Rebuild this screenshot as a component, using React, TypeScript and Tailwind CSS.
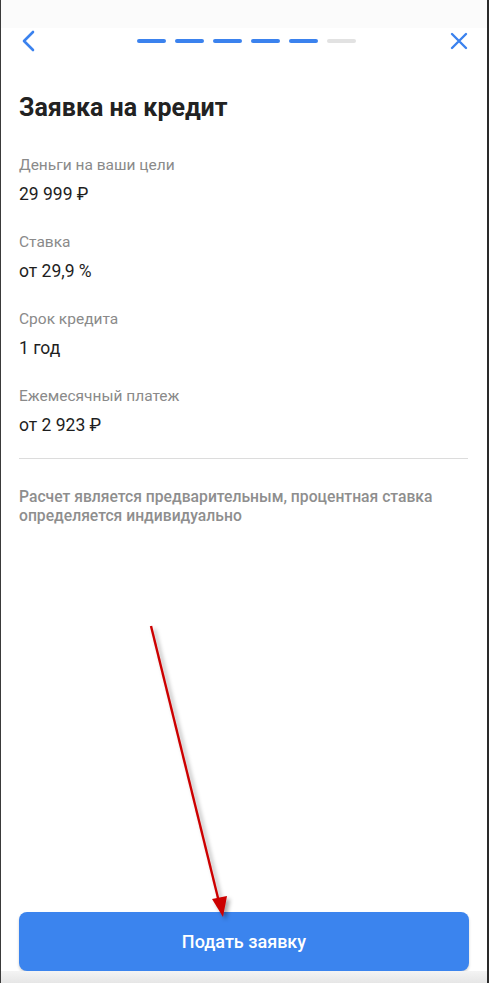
import React from 'react';

const rows = [
  { label: 'Деньги на ваши цели', value: '29 999 ₽' },
  { label: 'Ставка', value: 'от 29,9 %' },
  { label: 'Срок кредита', value: '1 год' },
  { label: 'Ежемесячный платеж', value: 'от 2 923 ₽' },
];

const steps = [true, true, true, true, true, false];

const App: React.FC = () => {
  return (
    <div
      className="relative w-[489px] h-[983px] flex flex-col bg-white border-l border-l-[#3a3a3a] border-r-2 border-r-[#2a2a2a] overflow-hidden"
      style={{ fontFamily: 'Roboto, "Noto Sans", sans-serif' }}
    >
      {/* header */}
      <div className="h-[28px] bg-[#fbfbfb]" />
      <div className="flex items-center justify-between h-[26px] pl-[20px] pr-[19px]">
        <svg width="16" height="22" viewBox="0 0 16 22" fill="none">
          <path d="M12 2 L3 11 L12 20" stroke="#3b82ee" strokeWidth="2.6" strokeLinecap="round" strokeLinejoin="round" />
        </svg>
        <div className="flex gap-[9px] ml-[6px]">
          {steps.map((done, i) => (
            <div key={i} className={`w-[29px] h-[4px] rounded-full ${done ? 'bg-[#3b82ee]' : 'bg-[#e2e2e2]'}`} />
          ))}
        </div>
        <svg width="18" height="18" viewBox="0 0 18 18" fill="none">
          <path d="M2 2 L16 16 M16 2 L2 16" stroke="#3b82ee" strokeWidth="2.4" strokeLinecap="round" />
        </svg>
      </div>

      <div className="pl-[18px] pr-[19px] pt-[39px]">
        <h1 className="text-[25px] leading-[30px] font-bold text-[#222]">Заявка на кредит</h1>

        <div className="mt-[32px] flex flex-col gap-[27px]">
          {rows.map(r => (
            <div key={r.label} className="flex flex-col gap-[7px]">
              <span className="text-[15.5px] leading-[21px] text-[#8a8a8a]">{r.label}</span>
              <span className="text-[17.5px] leading-[22px] text-[#1e1e1e]">{r.value}</span>
            </div>
          ))}
        </div>

        <div className="mt-[22px] h-px bg-[#dcdcdc]" />

        <p className="mt-[28px] text-[15.7px] leading-[19px] font-medium text-[#8e8e8e]">
          Расчет является предварительным, процентная ставка определяется индивидуально
        </p>
      </div>

      <div className="flex-1" />

      <div className="px-[18px]">
        <button className="w-full h-[59px] rounded-[8px] bg-[#3b84ee] text-white text-[18px] font-medium shadow-[0_2px_3px_rgba(0,0,0,0.18)]">
          Подать заявку
        </button>
      </div>
      <div className="h-[12px] bg-gradient-to-b from-[#f4f4f4] to-[#e6e6e6]" />

      {/* annotation arrow */}
      <svg className="absolute left-0 top-0 pointer-events-none" width="489" height="983">
        <defs>
          <filter id="sh" x="-50%" y="-10%" width="200%" height="120%">
            <feDropShadow dx="3" dy="3" stdDeviation="2" floodColor="#000" floodOpacity="0.35" />
          </filter>
        </defs>
        <g filter="url(#sh)">
          <line x1="150" y1="626" x2="218" y2="902" stroke="#cc0000" strokeWidth="2.4" />
          <polygon points="222,917 211,899 226,896" fill="#cc0000" />
        </g>
      </svg>
    </div>
  );
};

export default App;
